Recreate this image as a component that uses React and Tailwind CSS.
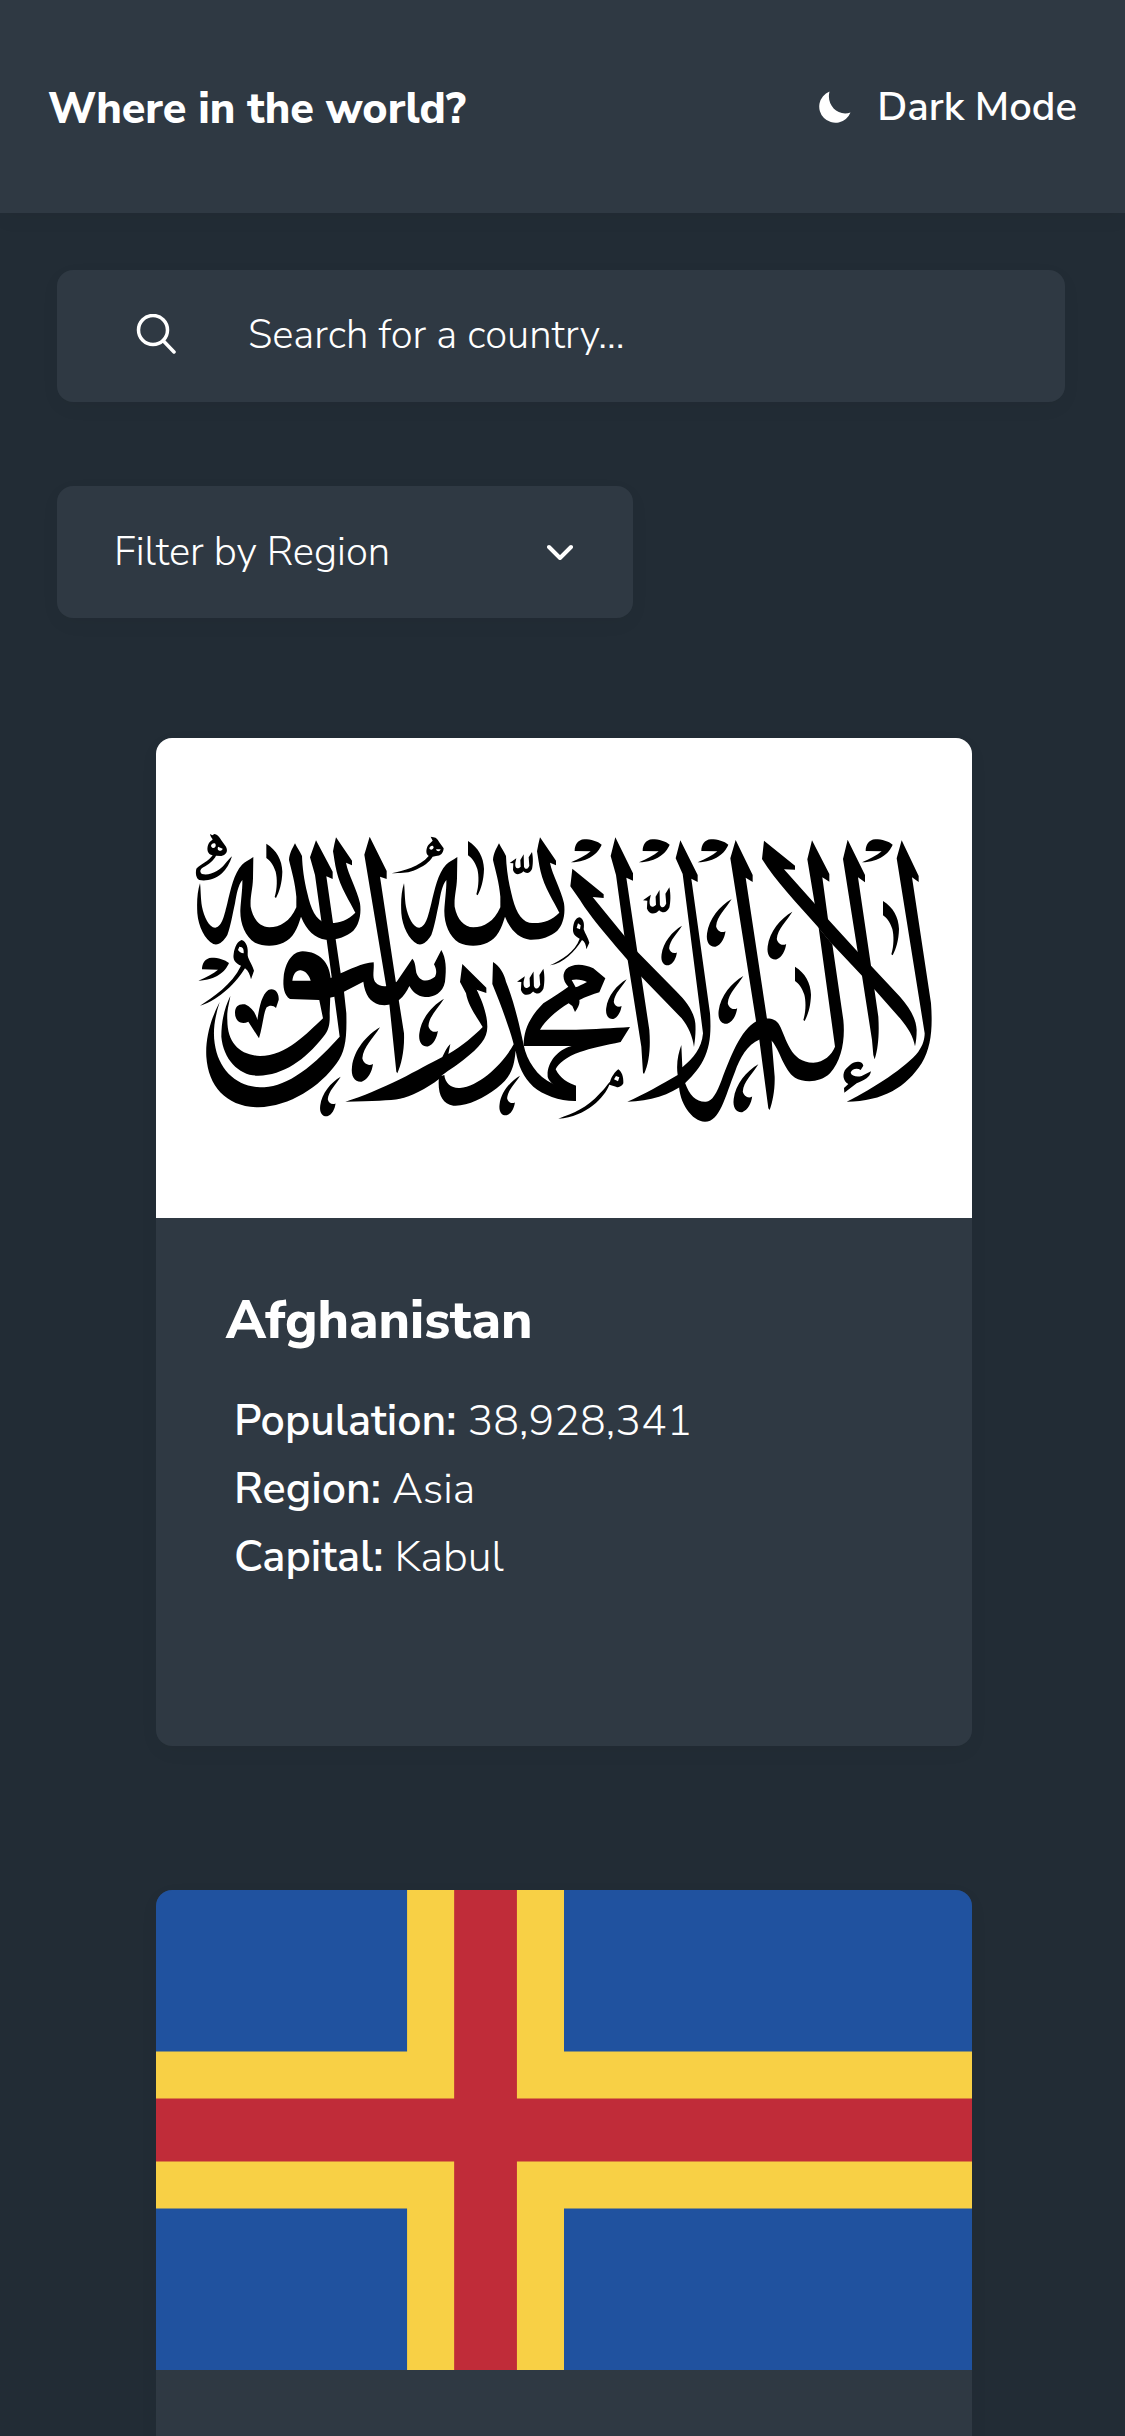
import { useState } from "react";

const TEARDROP =
  "M0,0 C-20,33 -50,58 -53,93 C-50,108 -35,118 -21,110 C-24,133 -35,156 -55,163 C-75,165 -88,148 -84,118 C-78,68 -40,23 0,0Z";
const DAGGER =
  "M0,0 C31,19 47,49 48,84 C47,119 39,144 29,163 L25,160 C33,134 33,104 28,84 C20,60 10,50 0,43Z";
const CURL =
  "M0,0 C0,-17 9,-34 29,-35 C49,-35 69,-29 81,-19 C69,8 44,31 -11,34 C12,24 34,13 48,1Z";
const TRIDENT =
  "M0,33 L20,19 L17,32 C15,49 23,54 33,44 L32,24 L42,7 L43,44 C47,54 55,52 59,41 L57,16 L67,0 C71,19 70,39 67,51 C61,64 51,67 41,58 C33,68 16,72 10,54 L11,34Z";
const SWEEP =
  "M60,250 C62,260 62,300 66,320 C72,350 88,384 106,383 C128,380 134,340 142,310 C152,268 162,220 186,194 C196,184 208,180 220,171 L219,235 C218,270 210,290 212,320 C220,360 240,380 268,382 C300,382 330,365 349,322 L349,290 C346,250 334,210 327,180 C328,160 338,144 345,130 C352,144 358,152 366,168 C367,200 372,240 382,280 C392,326 408,362 436,368 C470,372 500,364 526,338 C510,305 480,260 470,215 C464,190 462,170 459,154 C461,140 465,126 468,112 L516,182 L516,196 L498,188 C505,225 530,265 540,310 C545,345 536,375 520,392 C500,410 470,420 438,419 C405,415 380,392 363,350 C352,385 340,415 310,428 C285,440 250,440 225,428 C195,410 180,370 181,330 C183,300 188,262 187,240 C175,255 170,280 165,310 C158,340 152,380 142,405 C130,425 115,438 100,432 C75,420 55,380 52,340 C50,305 52,275 60,250Z";

function Mark({ d, x, y, s = 1 }) {
  return <path d={d} transform={`translate(${x} ${y}) scale(${s})`} />;
}

function AfghanistanFlag() {
  return (
    <svg
      viewBox="0 0 2448 1440"
      preserveAspectRatio="xMidYMid slice"
      className="block h-[480px] w-full bg-white"
      role="img"
      aria-label="Flag of Afghanistan"
      fillRule="evenodd"
    >
      <g transform="translate(72 186)">
        <path d="M90,102 L97,106 L103,102 C110,102 118,110 125,122 L138,140 C146,156 136,165 124,168 L108,167 C102,180 85,194 70,202 C60,208 58,216 66,222 C90,228 120,212 134,193 C142,184 148,176 156,169 C150,190 138,208 126,220 C105,240 75,244 58,240 C48,234 46,220 49,206 C62,192 86,184 98,166 C82,164 80,148 84,136 C88,124 96,122 98,118 C94,112 91,108 90,102Z M93,138 C93,130 106,126 107,134 C109,142 98,150 93,138Z M114,140 L128,146 C126,154 114,154 113,146Z" />
        <path d={SWEEP} />
        <Mark d={DAGGER} x={259} y={131} />
        <path d="M408,121 L458,215 L458,237 L439,229 L459,368 L467,418 L482,520 L492,575 L499,640 C501,720 495,755 470,790 C420,860 330,920 235,922 C140,920 85,860 79,770 C76,720 90,660 119,606 C105,650 98,690 104,730 C115,810 170,860 240,862 C310,862 380,820 479,710 L463,590 L440,420 L425,370 L405,225 L390,172Z" />
        <path d="M368,454 C420,455 448,490 452,534 L482,520 C510,508 545,490 581,487 C583,510 576,530 585,545 C595,558 610,560 620,558 L650,545 L697,476 C706,486 706,500 709,518 C720,548 745,546 765,530 C772,518 768,505 762,493 L784,450 C798,475 800,505 795,545 C788,580 760,592 735,591 C710,588 698,575 688,558 C680,575 672,588 657,600 C640,614 620,618 598,614 C570,605 555,585 550,545 L492,575 L463,590 L417,600 L330,597 C312,585 308,560 311,530 C316,490 335,455 368,454Z M337,542 C340,520 350,510 362,511 C378,513 388,528 392,542Z" />
        <path d="M417,596 L429,655 C380,700 320,768 240,768 C180,765 142,730 142,660 C140,630 148,610 151,588 C135,620 124,660 124,710 C130,780 180,828 235,827 C310,825 375,780 430,710 C448,690 450,670 449,640 L451,585Z" />
        <path d="M569,110 L620,213 V237 L600,230 L647,542 L672,700 C674,750 664,795 652,820 L649,815 L628,612 L618,555 L553,164Z" />
        <Mark d={CURL} x={66} y={508} />
        <path d="M185,420 C200,425 205,445 203,462 C202,475 215,490 222,512 L213,538 C210,525 205,512 195,505 C170,545 120,600 60,617 C100,590 155,555 183,497 C165,490 158,478 161,462 C164,440 172,424 185,420Z M178,440 C190,440 192,450 191,460 C183,460 178,455 174,450Z" />
        <path d="M237,715 L205,665 C185,675 165,665 165,638 C165,618 178,610 195,613 C215,622 228,640 232,660 C238,620 245,585 265,570 C285,562 298,580 296,600 L288,624 C280,615 268,615 260,622 C250,640 248,680 237,715Z" />
        <Mark d={TEARDROP} x={600} y={682} />
        <Mark d={TEARDROP} x={482} y={830} s={0.73} />
      </g>
      <g transform="translate(672 186)">
        <path d="M152,110 L160,112 C170,112 175,122 180,130 L191,145 C190,160 182,168 168,168 L158,170 C150,185 130,200 100,212 C80,220 60,218 35,220 C70,212 120,200 146,168 C136,162 138,145 145,135 L158,122Z M148,145 C150,136 160,134 161,142 C160,150 150,152 148,145Z M168,148 L182,148 C180,156 170,156 168,148Z" />
        <Mark d={SWEEP} x={12} y={0} />
        <Mark d={DAGGER} x={264} y={123} />
        <Mark d={TRIDENT} x={389} y={156} />
        <Mark d={TRIDENT} x={411} y={506} s={1.18} />
        <Mark d={TEARDROP} x={192} y={596} s={0.88} />
        <Mark d={TEARDROP} x={420} y={827} s={0.73} />
        <path d="M247,492 L319,563 V579 L290,569 C305,600 322,640 322,680 C322,715 300,740 250,780 C215,808 185,822 178,836 C140,866 90,890 60,896 C30,902 -20,902 -104,905 C-50,890 0,866 60,838 C110,812 150,790 187,771 C195,755 200,742 211,732 L205,762 C245,740 285,705 308,681 C290,650 265,620 258,580 L240,546Z" />
        <path d="M339,486 C360,500 372,520 378,545 C400,600 415,660 431,735 C440,780 470,830 520,852 C545,862 570,862 588,857 V903 C540,904 490,885 460,860 C430,830 415,800 407,752 C402,800 395,830 350,865 C310,895 260,920 220,917 C185,910 172,880 177,830 L193,825 C195,850 215,866 240,864 C300,858 370,790 401,733 C390,690 365,620 337,552Z" />
        <path d="M431,738 C430,690 450,650 490,610 C520,590 545,575 565,560 C550,545 545,525 558,508 C575,490 610,490 640,505 L676,535 L658,577 C640,582 615,592 598,600 C600,610 596,620 585,636 L577,618 L566,610 C540,625 500,655 480,689 L588,689 C640,688 700,684 750,681 L722,726 C680,735 630,745 600,756 C560,770 535,790 527,808 C540,835 565,850 588,857 V885 L530,862 C515,850 505,840 503,830 C500,790 530,750 575,738Z M575,540 C590,536 610,540 621,546 C605,555 592,560 587,562Z" />
      </g>
      <g transform="translate(1182 186)">
        <Mark d={CURL} x={74} y={153} />
        <Mark d={CURL} x={278} y={153} />
        <Mark d={CURL} x={454} y={153} />
        <Mark d={TRIDENT} x={279} y={262} s={1.18} />
        <Mark d={TEARDROP} x={545} y={297} s={0.88} />
        <Mark d={TEARDROP} x={396} y={377} s={0.73} />
        <Mark d={TEARDROP} x={580} y={528} s={0.88} />
        <Mark d={TEARDROP} x={230} y={538} s={0.73} />
        <Mark d={TEARDROP} x={625} y={793} s={0.88} />
        <path d="M88,352 C100,355 104,370 101,388 C105,400 115,415 118,428 L109,448 C108,435 105,425 96,420 C75,455 40,490 0,496 C35,480 75,455 89,416 C75,410 68,400 69,388 C70,368 76,355 88,352Z M84,370 L92,376 L90,388 L80,384Z" />
        <path d="M205,808 C215,815 221,830 220,850 C215,860 205,864 198,860 L178,854 C165,890 110,950 25,956 C70,940 110,925 150,880 C165,865 175,850 180,845 C185,830 195,815 205,808Z M198,828 L208,832 L204,844 L192,838Z" />
        <path d="M196,112 L249,220 V242 L229,233 L262,455 L274,530 L298,690 C302,740 298,790 282,822 L279,818 L274,740 L233,480 L198,225 L182,168Z" />
        <path d="M67,206 L161,283 V294 L128,291 L221,405 L262,455 L380,575 C410,605 432,635 436,670 C438,695 435,720 432,741 C428,710 415,680 395,655 L274,530 L233,480 C190,430 120,350 90,300 L61,259Z" />
        <path d="M391,121 L443,225 V246 L424,236 L480,640 C484,700 480,740 460,780 C445,810 420,835 405,850 C360,885 300,905 232,905 C280,885 340,850 383,825 C378,790 385,760 394,735 L397,802 C430,775 455,745 459,700 L398,222 L377,175Z" />
      </g>
      <g transform="translate(1752 186)">
        <Mark d={CURL} x={377} y={153} />
        <Mark d={DAGGER} x={429} y={303} />
        <Mark d={DAGGER} x={165} y={500} />
        <Mark d={TEARDROP} x={157} y={335} s={0.88} />
        <path d="M-183,848 L-165,848 C-152,885 -132,905 -105,905 C-85,908 -70,880 -55,840 C-30,775 0,690 50,663 C75,652 105,652 118,675 C140,715 150,788 220,788 C252,786 275,765 285,740 L236,383 L277,433 L310,660 C316,720 305,780 270,820 C240,850 190,848 165,833 C130,808 120,750 95,722 L60,718 C20,735 0,775 -15,815 C-45,890 -60,965 -105,965 C-145,965 -185,905 -183,848Z" />
        <path d="M-13,120 L38,225 V246 L17,233 L81,657 L95,722 L104,830 C105,870 98,905 89,930 L85,925 L58,720 L48,663 L-29,175Z" />
        <path d="M216,121 L268,222 V245 L247,232 L264,358 L277,433 L236,383 L202,178Z" />
        <path d="M72,122 L165,197 V209 L132,208 L225,312 L264,358 L353,455 L393,497 L480,590 C510,625 528,655 530,690 C530,710 528,725 525,739 C520,710 505,685 480,655 L405,570 L366,527 L277,433 L236,383 C170,310 105,240 66,177Z" />
        <path d="M323,119 L375,225 V247 L354,232 L393,497 L415,650 C418,700 415,745 404,778 L400,765 L396,720 L366,527 L353,455 L309,177Z" />
        <path d="M485,121 L536,228 V246 L516,232 L573,610 C578,680 575,740 545,790 C500,860 430,905 320,905 C400,865 500,800 535,755 C550,735 554,715 554,700 L470,175Z" />
        <path d="M330,795 C345,782 368,782 370,797 L362,810 C350,802 335,808 332,818 C335,828 350,832 365,828 L393,814 C390,832 375,840 350,850 L313,878 L312,864 L325,852 C308,842 306,820 318,806Z" />
      </g>
    </svg>
  );
}

function AlandFlag() {
  return (
    <svg
      viewBox="0 0 26 17"
      preserveAspectRatio="xMidYMid slice"
      className="block h-[480px] w-full"
      role="img"
      aria-label="Flag of Åland Islands"
    >
      <path fill="#20529f" d="M0 0h26v17H0z" />
      <path fill="#f8d045" d="M8 0h5v17H8zM0 6h26v5H0z" />
      <path fill="#c02c39" d="M9.5 0h2v17h-2zM0 7.5h26v2H0z" />
    </svg>
  );
}

const COUNTRIES = [
  {
    name: "Afghanistan",
    Flag: AfghanistanFlag,
    facts: [
      ["Population", "38,928,341"],
      ["Region", "Asia"],
      ["Capital", "Kabul"],
    ],
  },
  { name: "", Flag: AlandFlag, facts: [] },
];

const REGIONS = ["Africa", "Americas", "Asia", "Europe", "Oceania"];

function CountryCard({ name, Flag, facts }) {
  return (
    <article className="min-h-[1008px] overflow-hidden rounded-2xl bg-[#2f3943] shadow-[0_6px_20px_rgba(0,0,0,0.04)]">
      <Flag />
      {name && (
        <div className="px-[70px] pt-[69px]">
          <h2 className="text-[53px] leading-[68px] font-extrabold">{name}</h2>
          <dl className="mt-8 px-2 text-[43px] leading-[68px]">
            {facts.map(([label, value]) => (
              <div key={label} className="flex gap-[11px]">
                <dt className="font-semibold">{label}:</dt>
                <dd className="font-light">{value}</dd>
              </div>
            ))}
          </dl>
        </div>
      )}
    </article>
  );
}

export default function App() {
  const [query, setQuery] = useState("");
  return (
    <div className="h-screen overflow-hidden bg-[#222c35] font-['Nunito_Sans','Lato',sans-serif] text-white">
      <header className="flex h-[213px] items-center justify-between bg-[#2f3943] px-12 shadow-[0_6px_20px_rgba(0,0,0,0.04)]">
        <h1 className="pt-1 text-[43px] leading-[60px] font-extrabold">Where in the world?</h1>
        <button type="button" className="flex items-center gap-[26px] text-[40px] leading-[60px] font-semibold">
          <svg viewBox="0 0 32 32" className="size-8" fill="currentColor" aria-hidden="true">
            <path d="M10.5 0.5A16.2 16.2 0 1 0 31.5 21.5C19 26 7 14 10.500 0.500Z" />
          </svg>
          Dark Mode
        </button>
      </header>

      <main>
        <form className="pt-[57px] pr-[60px] pl-[57px]" onSubmit={(e) => e.preventDefault()}>
          <label className="flex h-[132px] items-center gap-[72px] rounded-2xl bg-[#2f3943] pr-12 pb-1 pl-[79px] shadow-[0_6px_20px_rgba(0,0,0,0.04)]">
            <svg
              viewBox="0 0 40 40"
              className="size-10 shrink-0"
              fill="none"
              stroke="currentColor"
              strokeWidth="3.500"
              strokeLinecap="round"
              aria-hidden="true"
            >
              <circle cx="17" cy="16" r="14.500" />
              <path d="M27.500 27L38 38" />
            </svg>
            <input
              type="text"
              aria-label="Search for a country"
              placeholder="Search for a country..."
              value={query}
              onChange={(e) => setQuery(e.target.value)}
              className="min-w-0 flex-1 bg-transparent pt-0.5 text-[40px] leading-[60px] font-light outline-none placeholder:text-white"
            />
          </label>

          <div className="mt-[84px] grid w-[576px] max-w-full items-center rounded-2xl bg-[#2f3943] shadow-[0_6px_20px_rgba(0,0,0,0.04)]">
            <select
              aria-label="Filter by Region"
              defaultValue=""
              className="col-start-1 row-start-1 h-[132px] w-full appearance-none rounded-2xl bg-transparent px-[57px] text-[40px] font-light outline-none"
            >
              <option value="">Filter by Region</option>
              {REGIONS.map((region) => (
                <option key={region}>{region}</option>
              ))}
            </select>
            <svg
              viewBox="0 0 26 16"
              className="pointer-events-none col-start-1 row-start-1 mr-[60px] h-4 w-[26px] justify-self-end"
              fill="none"
              stroke="currentColor"
              strokeWidth="4"
              strokeLinecap="round"
              strokeLinejoin="round"
              aria-hidden="true"
            >
              <path d="M2 3L13 14L24 3" />
            </svg>
          </div>
        </form>

        <section aria-label="Countries" className="grid gap-36 pt-[120px] pr-[153px] pl-[156px]">
          {COUNTRIES.map((country, i) => (
            <CountryCard key={i} {...country} />
          ))}
        </section>
      </main>
    </div>
  );
}
